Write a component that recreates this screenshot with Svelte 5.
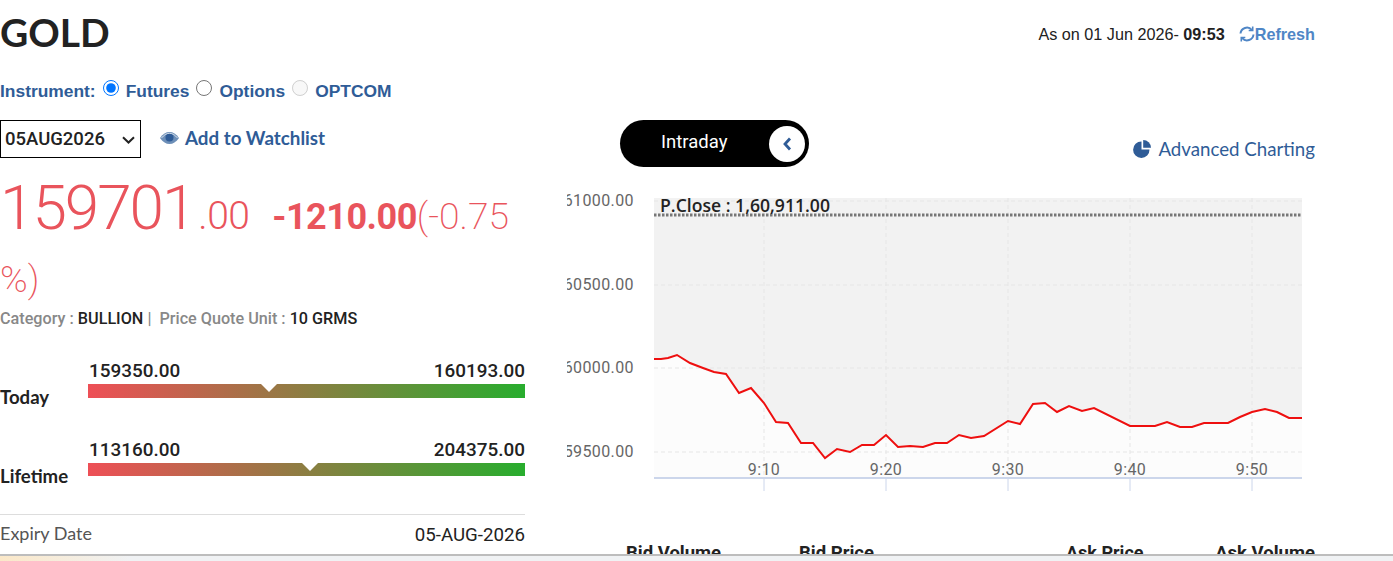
<script>
  const pts = [[654,359],[661,359],[668,358],[677,355],[690,363],[703,368],[714,372],[726,374],[739,393],[751,388],[764,403],[776,422],[788,423],[801,443],[813,443],[825,458],[837,449],[850,452],[862,445],[874,445],[886,435],[898,447],[910,446],[923,447],[935,443],[947,443],[959,435],[971,438],[984,436],[1008,421],[1020,424],[1033,404],[1045,403],[1057,412],[1069,406],[1082,411],[1094,408],[1130,426],[1155,426],[1167,422],[1180,427],[1192,427],[1204,423],[1228,423],[1240,417],[1252,412],[1265,409],[1277,412],[1289,418],[1302,418]];
  const line = pts.map(p => p.join(',')).join(' ');
  const xs = [764,886,1008,1130,1252];
  const labels = ['9:10','9:20','9:30','9:40','9:50'];
  const ys = [
    { y: 200, t: '161000.00' },
    { y: 284, t: '160500.00' },
    { y: 367, t: '160000.00' },
    { y: 451, t: '159500.00' }
  ];
</script>

<div class="page">
  <div class="wrap">
    <div class="left">
      <h1>GOLD</h1>
      <div class="instrument">
        <span class="lbl">Instrument:</span>
        <input type="radio" name="i" checked />
        <span class="opt">Futures</span>
        <input type="radio" name="i" />
        <span class="opt">Options</span>
        <input type="radio" name="i" disabled />
        <span class="opt">OPTCOM</span>
      </div>
      <div class="selrow">
        <div class="selbox">
          <select><option>05AUG2026</option></select>
          <svg class="chev" width="13" height="8" viewBox="0 0 13 8" fill="none" stroke="#222" stroke-width="2"><path d="M1 1.200 6.500 6.500 12 1.200"/></svg>
        </div>
        <a class="watch">
          <svg width="19" height="12" viewBox="0 0 19 12"><path d="M0 6C3 1.800 6 0 9.500 0S16 1.800 19 6c-3 4.200-6 6-9.500 6S3 10.200 0 6z" fill="#6d8fb8"/><circle cx="9.500" cy="5.500" r="4" fill="#2f5c97"/><path d="M1.500 6C4 3 6.500 1.300 9.500 1.300S15 3 17.500 6" fill="none" stroke="#fff" stroke-width=".7"/></svg>
          Add to Watchlist
        </a>
      </div>
      <div class="price">
        <span class="big">159701</span><span class="dec">.00</span>
        <span class="chg">-1210.00</span><span class="pct">(-0.75 %)</span>
      </div>
      <div class="cat">
        <span>Category :&nbsp;</span><b>BULLION</b><span>&nbsp;|&nbsp; Price Quote Unit :&nbsp;</span><b>10 GRMS</b>
      </div>
      <div class="range today">
        <div class="rlabel">Today</div>
        <div class="rbody">
          <div class="vals"><span>159350.00</span><span>160193.00</span></div>
          <div class="bar tall"><i class="mark m1"></i></div>
        </div>
      </div>
      <div class="range life">
        <div class="rlabel">Lifetime</div>
        <div class="rbody">
          <div class="vals"><span>113160.00</span><span>204375.00</span></div>
          <div class="bar"><i class="mark m2"></i></div>
        </div>
      </div>
      <div class="expiry"><span>Expiry Date</span><span class="ev">05-AUG-2026</span></div>
    </div>

    <div class="right">
      <div class="asof">
        <span>As on 01 Jun 2026- <b>09:53</b></span>
        <a class="refresh">
          <svg width="16" height="16" viewBox="0 0 16 16" fill="none" stroke="#4f86c6" stroke-width="2"><path d="M1.500 7.500A6.500 6.500 0 0 1 12.800 3.800"/><path d="M13.700 .5v4H9.700" stroke-width="1.600"/><path d="M14.500 8.500A6.500 6.500 0 0 1 3.200 12.200"/><path d="M2.300 15.500v-4h4" stroke-width="1.600"/></svg>Refresh
        </a>
      </div>
      <div class="toolbar">
        <div class="pill">
          <span>Intraday</span>
          <div class="knob">
            <svg width="10" height="14" viewBox="0 0 10 14" fill="none" stroke="#2f5c97" stroke-width="2.800"><path d="M8 1.500 3 7l5 5.500"/></svg>
          </div>
        </div>
        <a class="adv">
          <svg width="19" height="18" viewBox="0 0 19 18"><path d="M8.500 1.500v8h8A8.200 8.200 0 1 1 8.500 1.500z" fill="#2f5c97"/><path d="M10.200 0a8 8 0 0 1 7.800 7.800h-7.800z" fill="#2f5c97"/></svg>
          Advanced Charting
        </a>
      </div>
      <div class="chart">
        <svg width="748" height="306" viewBox="567 190 748 306">
          <rect x="654" y="198" width="648" height="280" fill="#f2f2f2"/>
          <polygon points="{line} 1302,478 654,478" fill="#fcfcfc"/>
          {#each xs as x}
            <line x1={x} x2={x} y1="198" y2="478" stroke="#e6e6e6" stroke-dasharray="4 3"/>
            <line x1={x} x2={x} y1="478" y2="491" stroke="#ccd6eb"/>
          {/each}
          {#each ys as r}
            <line x1="654" x2="1302" y1={r.y + 1} y2={r.y + 1} stroke="#e6e6e6" stroke-dasharray="4 3"/>
          {/each}
          <line x1="654" x2="1302" y1="478" y2="478" stroke="#ccd6eb" stroke-width="2"/>
          <line x1="654" x2="1302" y1="215" y2="215" stroke="#777" stroke-width="3" stroke-dasharray="2.500 1.500"/>
          <polyline points={line} fill="none" stroke="#ee0f0f" stroke-width="2"/>
          {#each ys as r}
            <text class="ylab" x="634" y={r.y + 6} text-anchor="end">{r.t}</text>
          {/each}
          {#each labels as l, i}
            <text class="xlab" x={xs[i]} y="475" text-anchor="middle">{l}</text>
          {/each}
          <text class="pclose" x="660" y="212">P.Close : 1,60,911.00</text>
        </svg>
      </div>
      <div class="bidhead">
        <span class="h1">Bid Volume</span>
        <span class="h2">Bid Price</span>
        <span class="h3">Ask Price</span>
        <span class="h4">Ask Volume</span>
      </div>
    </div>
  </div>
  <div class="strip"></div>
</div>

<style>
  :global(body) { margin: 0; background: #fff; overflow: hidden; }
  .page { width: 1393px; height: 561px; position: relative; overflow: hidden; font-family: "Lato", sans-serif; color: #222; }
  .wrap { display: flex; width: 1315px; height: 554px; overflow: hidden; }
  .left { width: 525px; flex: none; }
  .right { flex: 1; margin-left: 30px; min-width: 0; overflow: hidden; }
  h1 { margin: 0; padding-top: 11px; font: 700 39px/42px "Lato", sans-serif; color: #222; }
  .instrument { display: flex; align-items: center; margin-top: 27px; height: 22px; font: 700 17.400px/22px "Liberation Sans", sans-serif; color: #2f5c97; white-space: nowrap; }
  .instrument input { margin: 0 0 6px 7px; width: 16px; height: 16px; flex: none; }
  .opt { margin-left: 7px; }
  .selrow { display: flex; align-items: center; margin-top: 18px; }
  .selbox { position: relative; width: 141px; height: 38px; }
  select { appearance: none; display: block; width: 141px; height: 38px; border: 1px solid #000; border-radius: 0; background: #fff; padding: 0 0 0 4px; font: 500 18.500px "Roboto", "Liberation Sans", sans-serif; color: #222; }
  .chev { position: absolute; left: 122px; top: 16px; pointer-events: none; }
  .watch { display: flex; align-items: center; gap: 6px; margin: -3px 0 0 19px; font: 700 18.800px/24px "Lato", sans-serif; color: #2f5c97; }
  .price { margin-top: 19px; font: 300 36px/62px "Roboto", sans-serif; color: #e9545c; width: 525px; }
  .big { font-size: 62px; letter-spacing: -2px; }
  .dec { font-size: 39px; margin-left: 4px; letter-spacing: -0.5px; }
  .chg { font-weight: 700; margin-left: 14px; letter-spacing: -0.5px; }
  .pct { font-size: 37.300px; font-weight: 200; }
  .cat { margin-top: -2px; font: 500 16.200px/20px "Roboto", sans-serif; color: #888; white-space: nowrap; }
  .cat b { color: #222; font-weight: 500; }
  .range { display: flex; position: relative; }
  .today { margin-top: 29px; }
  .life { margin-top: 39px; }
  .rlabel { position: absolute; left: 0; bottom: -11px; font: 700 18.600px/24px "Lato", sans-serif; color: #222; }
  .life .rlabel { bottom: -12px; }
  .rbody { margin-left: 88px; width: 437px; }
  .vals { display: flex; justify-content: space-between; padding: 0 0 0 1px; font: 500 18.900px/26px "Roboto", sans-serif; color: #222; }
  .bar { height: 13px; position: relative; overflow: hidden; background: linear-gradient(90deg, #ee4f56, #28ad2e); }
  .bar.tall { height: 14px; }
  .mark { position: absolute; top: 0; width: 0; height: 0; border: 8px solid transparent; border-top: 8px solid #fff; border-bottom: 0; margin-left: -8px; }
  .m1 { left: 181px; }
  .m2 { left: 222px; }
  .expiry { display: flex; justify-content: space-between; margin-top: 38px; border-top: 1px solid #ddd; padding-top: 6px; font: 400 18px/25px "Lato", sans-serif; color: #555; }
  .ev { font-family: "Roboto", sans-serif; font-size: 18.700px; color: #222; padding-top: 2px; }
  .asof { display: flex; justify-content: flex-end; align-items: center; gap: 14px; padding-top: 23px; height: 21px; font: 400 16.200px/20px "Liberation Sans", sans-serif; color: #222; }
  .asof b { font-weight: 700; }
  .refresh { display: flex; align-items: center; font-weight: 700; color: #4f86c6; }
  .toolbar { display: flex; justify-content: space-between; margin-top: 76px; padding-left: 65px; height: 47px; }
  .pill { width: 189px; height: 47px; box-sizing: border-box; border-radius: 24px; background: #000; color: #fff; display: flex; align-items: center; justify-content: space-between; padding: 0 4px 0 41px; font: 400 18.500px/22px "Roboto", sans-serif; }
  .pill span { margin-bottom: 3px; }
  .knob { width: 36px; height: 36px; border-radius: 50%; background: #fff; display: flex; align-items: center; justify-content: center; }
  .adv { display: flex; align-items: center; gap: 6px; margin-top: 11px; height: 36px; font: 400 18.700px/24px "Lato", sans-serif; color: #2f5c97; }
  .chart { margin: 23px 0 0 12px; height: 306px; overflow: hidden; }
  .chart svg { display: block; }
  .ylab, .xlab { font: 400 16px "Roboto", sans-serif; fill: #666; letter-spacing: .4px; }
  .pclose { font: 600 17.600px "Open Sans", sans-serif; fill: #222; }
  .bidhead { position: relative; height: 40px; margin-top: 46px; font: 700 18.500px/22px "Roboto", sans-serif; color: #222; }
  .bidhead span { position: absolute; top: 0; white-space: nowrap; }
  .h1 { left: 71px; }
  .h2 { left: 244px; }
  .h3 { left: 511px; font-size: 18px; }
  .h4 { right: 0; }
  .strip { position: absolute; left: 0; right: 0; top: 554px; height: 7px; border-top: 2px solid #bdbdbd; box-sizing: border-box; background: linear-gradient(90deg, #fbe8c8 0, #f0f2f4 130px); }
</style>
